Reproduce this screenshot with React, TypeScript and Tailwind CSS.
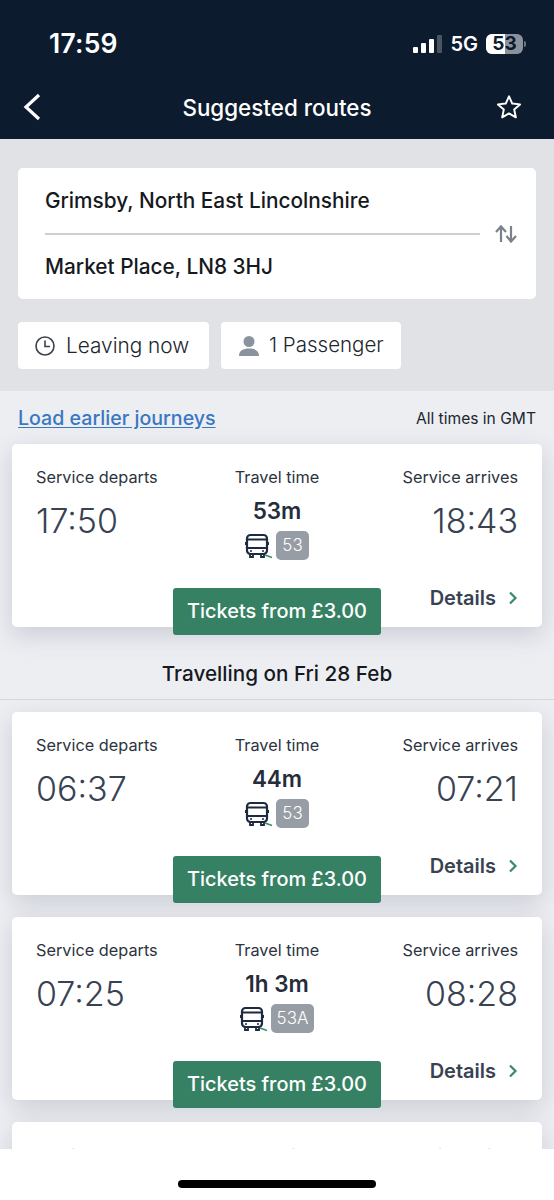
import React from "react";

const font = { fontFamily: "Inter, 'Noto Sans', sans-serif" };

function BusIcon() {
  return (
    <svg width="28" height="26" viewBox="0 0 28 26" fill="none" className="shrink-0">
      <rect x="2" y="2" width="20" height="19" rx="3.5" stroke="#1d2a3f" strokeWidth="2.2" />
      <path d="M2 6.5H22M2 15H22" stroke="#1d2a3f" strokeWidth="2" />
      <path d="M1 9V12M23 9V12" stroke="#1d2a3f" strokeWidth="2" />
      <path d="M5 21V24H8V21M16 21V24H19V21" stroke="#1d2a3f" strokeWidth="1.8" />
      <circle cx="6" cy="18" r="1" fill="#1d2a3f" />
      <circle cx="18" cy="18" r="1" fill="#1d2a3f" />
      <path d="M20 22L27 24.5" stroke="#3a9070" strokeWidth="1.8" />
    </svg>
  );
}

const label = "text-[16.3px] leading-[24px] text-[#2c3440]";
const timeText = "mt-[12px] text-[34px] leading-[40px] font-light text-[#384252]";

function Card({ dep, dur, arr, route, className }: { dep?: string; dur?: string; arr?: string; route?: string; className?: string }) {
  return (
    <div className={"relative mx-3 h-[183px] shrink-0 rounded-[5px] bg-white px-6 pt-[21px] shadow-[0_8px_24px_rgba(70,75,100,0.2)] " + (className ?? "")}>
      <div className="flex justify-between">
        <div className="flex flex-col">
          <span className={label}>Service departs</span>
          {dep && <span className={timeText}>{dep}</span>}
        </div>
        <div className="absolute left-0 right-0 top-[21px] flex flex-col items-center">
          <span className={label}>Travel time</span>
          {dur && <span className="mt-[9px] text-[22.5px] leading-[26px] font-semibold text-[#252d3a]">{dur}</span>}
          {route && (
            <div className="mt-[7px] flex items-center gap-[3px]">
              <BusIcon />
              <span className="flex h-[29px] items-center rounded-[5px] bg-[#979da5] px-[6px] text-[17px] font-light text-white">{route}</span>
            </div>
          )}
        </div>
        <div className="flex flex-col items-end">
          <span className={label}>Service arrives</span>
          {arr && <span className={timeText}>{arr}</span>}
        </div>
      </div>
      {dep && (
        <>
          <div className="absolute right-6 top-[140px] flex items-center gap-[12px]">
            <span className="text-[20px] leading-[28px] font-semibold text-[#384252]">Details</span>
            <svg width="10" height="14" viewBox="0 0 10 14" fill="none">
              <path d="M2 1.5L7.5 7L2 12.5" stroke="#3a8a6a" strokeWidth="2.2" />
            </svg>
          </div>
          <div className="absolute bottom-[-8px] left-[161px] flex h-[47px] w-[208px] items-center justify-center rounded-[3px] bg-[#368164] text-[19.9px] font-medium text-white">
            Tickets from £3.00
          </div>
        </>
      )}
    </div>
  );
}

export default function App() {
  return (
    <div style={font} className="flex h-[1200px] w-[554px] flex-col overflow-hidden bg-white">
      <header className="flex h-[139px] shrink-0 flex-col bg-[#0c1b2e] text-white">
        <div className="flex h-[87px] items-center justify-between pl-[49px] pr-[28px] pt-[1px]">
          <span className="text-[26.5px] font-semibold tracking-[0.2px]">17:59</span>
          <div className="flex items-center">
            <div className="flex items-end gap-[3px]">
              <span className="h-[6px] w-[5px] rounded-[1px] bg-white" />
              <span className="h-[10px] w-[5px] rounded-[1px] bg-white" />
              <span className="h-[14px] w-[5px] rounded-[1px] bg-white" />
              <span className="h-[18px] w-[5px] rounded-[1px] bg-[#4a5563]" />
            </div>
            <span className="ml-[8px] text-[20px] font-semibold">5G</span>
            <div className="relative ml-[8px] flex h-[20px] w-[37px] items-center justify-center rounded-[6px] bg-[#8b929c]">
              <span className="absolute inset-y-0 left-0 w-[19px] rounded-l-[6px] bg-white" />
              <span className="relative text-[19px] leading-[20px] font-bold text-[#0c1b2e]">53</span>
            </div>
            <span className="ml-[1px] h-[6px] w-[2px] rounded-r-[2px] bg-[#6d7580]" />
          </div>
        </div>
        <div className="flex h-[42px] items-center pl-[21px] pr-[32px]">
          <svg width="22" height="28" viewBox="0 0 22 28" fill="none" className="shrink-0 -translate-y-[1px]">
            <path d="M18 2L5 14L18 26" stroke="white" strokeWidth="3.2" />
          </svg>
          <span className="flex-1 pl-[15px] text-center text-[22.4px] font-medium">Suggested routes</span>
          <svg width="26" height="26" viewBox="0 0 24 24" fill="none" className="shrink-0 -translate-y-[1px]">
            <path d="M12 2.2L15 8.8L22.2 9.6L16.8 14.4L18.3 21.5L12 17.9L5.7 21.5L7.2 14.4L1.8 9.6L9 8.8Z" stroke="white" strokeWidth="1.8" strokeLinejoin="round" />
          </svg>
        </div>
      </header>

      <section className="flex h-[252px] shrink-0 flex-col bg-[#e0e2e5] px-[18px] pt-[29px]">
        <div className="flex h-[131px] items-center rounded-[5px] bg-white pl-[27px] pr-[18px]">
          <div className="flex-1">
            <div className="flex h-[65px] items-center pt-[1px] text-[20.8px] font-medium text-[#16191d]">Grimsby, North East Lincolnshire</div>
            <div className="h-[2px] bg-[#cdd0d3]" />
            <div className="flex h-[64px] items-center text-[20.8px] font-medium text-[#16191d]">Market Place, LN8 3HJ</div>
          </div>
          <svg width="24" height="20" viewBox="0 0 24 20" fill="none" className="ml-[14px]">
            <path d="M7 18V3M2 8L7 2.5L12 8" stroke="#79828b" strokeWidth="2.2" />
            <path d="M17 2V17M12.5 12L17 17.5L22 12" stroke="#79828b" strokeWidth="2.2" />
          </svg>
        </div>
        <div className="mt-[23px] flex gap-3">
          <div className="flex h-[47px] w-[191px] items-center gap-[10px] rounded-[4px] bg-white pl-[16px]">
            <svg width="22" height="22" viewBox="0 0 22 22" fill="none">
              <circle cx="11" cy="11" r="9" stroke="#3b424c" strokeWidth="1.6" />
              <path d="M11 5.5V11.5H16" stroke="#3b424c" strokeWidth="1.6" />
            </svg>
            <span className="text-[20.8px] font-light text-[#20262e]">Leaving now</span>
          </div>
          <div className="flex h-[47px] w-[180px] items-center gap-[9px] rounded-[4px] bg-white pl-[17px]">
            <svg width="22" height="22" viewBox="0 0 22 22" fill="#8a929d">
              <circle cx="11" cy="6.5" r="5.5" />
              <path d="M1 21C1 15.5 5 13.5 11 13.5C17 13.5 21 15.5 21 21Z" />
            </svg>
            <span className="text-[20.5px] font-light text-[#20262e]">1 Passenger</span>
          </div>
        </div>
      </section>

      <main className="flex h-[758px] shrink-0 flex-col overflow-hidden bg-[#eceef2]">
        <div className="flex h-[53px] shrink-0 items-center justify-between px-[18px] pt-[2px]">
          <span className="text-[19.6px] font-medium text-[#3a77c2] underline underline-offset-2">Load earlier journeys</span>
          <span className="text-[15.6px] text-[#20262e]">All times in GMT</span>
        </div>
        <Card dep="17:50" dur="53m" arr="18:43" route="53" />
        <div className="mt-[8px] flex h-[65px] shrink-0 items-center justify-center border-b border-[#d5d7db] pt-[14px] text-[20.7px] font-medium text-[#16191d]">
          Travelling on Fri 28 Feb
        </div>
        <Card className="mt-[12px]" dep="06:37" dur="44m" arr="07:21" route="53" />
        <Card className="mt-[22px]" dep="07:25" dur="1h 3m" arr="08:28" route="53A" />
        <Card className="mt-[22px]" />
      </main>

      <footer className="flex flex-1 items-start justify-center bg-white pt-[31px]">
        <span className="h-[8px] w-[198px] rounded-full bg-black" />
      </footer>
    </div>
  );
}
